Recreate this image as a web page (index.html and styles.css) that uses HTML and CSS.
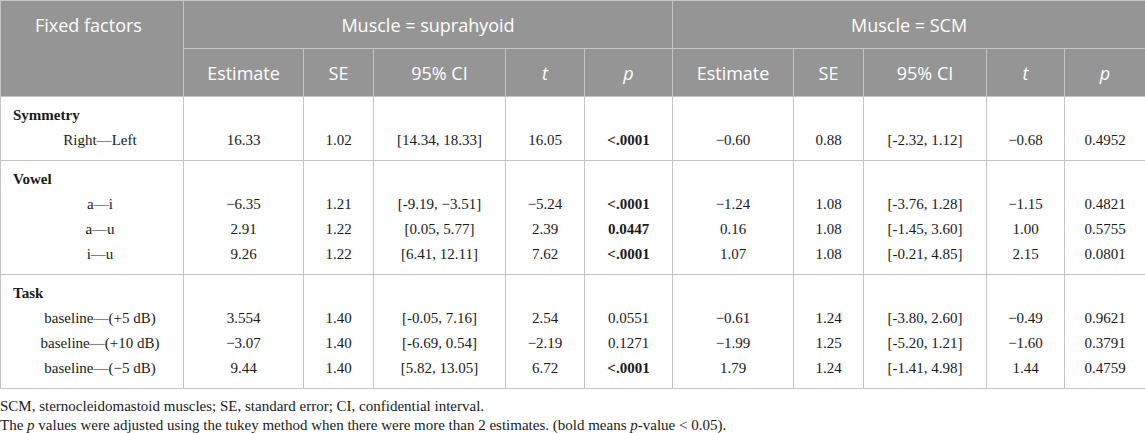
FILE: index.html
```html
<!DOCTYPE html>
<html lang="en">
    <head>
        <meta charset="UTF-8">
        <meta name="viewport" content="width=device-width, initial-scale=1.0">
        <title>Fixed factors by muscle</title>
        <link rel="stylesheet" href="styles.css">
    </head>
    <body>
        <table class="results">
            <colgroup>
                <col class="c-factor">
                <col class="c-est"><col class="c-se"><col class="c-ci"><col class="c-t"><col class="c-p">
                <col class="c-est2"><col class="c-se"><col class="c-ci2"><col class="c-t2"><col class="c-p2">
            </colgroup>
            <thead>
                <tr>
                    <th rowspan="2" class="factor-head">Fixed factors</th>
                    <th colspan="5">Muscle = suprahyoid</th>
                    <th colspan="5">Muscle = SCM</th>
                </tr>
                <tr>
                    <th>Estimate</th><th>SE</th><th>95% CI</th><th><i>t</i></th><th><i>p</i></th>
                    <th>Estimate</th><th>SE</th><th>95% CI</th><th><i>t</i></th><th><i>p</i></th>
                </tr>
            </thead>
            <tbody>
                <tr class="first"><td class="group">Symmetry</td><td></td><td></td><td></td><td></td><td></td><td></td><td></td><td></td><td></td><td></td></tr>
                <tr class="last"><td class="label">Right—Left</td><td>16.33</td><td>1.02</td><td>[14.34, 18.33]</td><td>16.05</td><td><b>&lt;.0001</b></td><td>−0.60</td><td>0.88</td><td>[-2.32, 1.12]</td><td>−0.68</td><td>0.4952</td></tr>
            </tbody>
            <tbody>
                <tr class="first"><td class="group">Vowel</td><td></td><td></td><td></td><td></td><td></td><td></td><td></td><td></td><td></td><td></td></tr>
                <tr><td class="label">a—i</td><td>−6.35</td><td>1.21</td><td>[-9.19, −3.51]</td><td>−5.24</td><td><b>&lt;.0001</b></td><td>−1.24</td><td>1.08</td><td>[-3.76, 1.28]</td><td>−1.15</td><td>0.4821</td></tr>
                <tr><td class="label">a—u</td><td>2.91</td><td>1.22</td><td>[0.05, 5.77]</td><td>2.39</td><td><b>0.0447</b></td><td>0.16</td><td>1.08</td><td>[-1.45, 3.60]</td><td>1.00</td><td>0.5755</td></tr>
                <tr class="last"><td class="label">i—u</td><td>9.26</td><td>1.22</td><td>[6.41, 12.11]</td><td>7.62</td><td><b>&lt;.0001</b></td><td>1.07</td><td>1.08</td><td>[-0.21, 4.85]</td><td>2.15</td><td>0.0801</td></tr>
            </tbody>
            <tbody>
                <tr class="first"><td class="group">Task</td><td></td><td></td><td></td><td></td><td></td><td></td><td></td><td></td><td></td><td></td></tr>
                <tr><td class="label">baseline—(+5 dB)</td><td>3.554</td><td>1.40</td><td>[-0.05, 7.16]</td><td>2.54</td><td>0.0551</td><td>−0.61</td><td>1.24</td><td>[-3.80, 2.60]</td><td>−0.49</td><td>0.9621</td></tr>
                <tr><td class="label">baseline—(+10 dB)</td><td>−3.07</td><td>1.40</td><td>[-6.69, 0.54]</td><td>−2.19</td><td>0.1271</td><td>−1.99</td><td>1.25</td><td>[-5.20, 1.21]</td><td>−1.60</td><td>0.3791</td></tr>
                <tr class="last"><td class="label">baseline—(−5 dB)</td><td>9.44</td><td>1.40</td><td>[5.82, 13.05]</td><td>6.72</td><td><b>&lt;.0001</b></td><td>1.79</td><td>1.24</td><td>[-1.41, 4.98]</td><td>1.44</td><td>0.4759</td></tr>
            </tbody>
        </table>
        <div class="notes">
            <p>SCM, sternocleidomastoid muscles; SE, standard error; CI, confidential interval.</p>
            <p>The <i>p</i> values were adjusted using the tukey method when there were more than 2 estimates. (bold means <i>p</i>-value &lt; 0.05).</p>
        </div>
    </body>
</html>
```

FILE: styles.css
```css
body {
    background: white;
    color: #1a1a1a;
    font-family: "Liberation Serif", "Times New Roman", serif;
    margin: 0;
    width: 1145px;
}
.results {
    border-collapse: collapse;
    table-layout: fixed;
    width: 1145px;
}
.c-factor { width: 183px; }
.c-est { width: 120px; }
.c-se { width: 70px; }
.c-ci { width: 132px; }
.c-t { width: 79px; }
.c-p { width: 88px; }
.c-est2 { width: 121px; }
.c-ci2 { width: 123px; }
.c-t2 { width: 78px; }
.c-p2 { width: 81px; }
th {
    background: #959595;
    border: 1px solid #c4c4c4;
    color: white;
    font-family: "Open Sans", "Liberation Sans", sans-serif;
    font-size: 18px;
    font-weight: normal;
    height: 47px;
    padding: 0;
    text-align: center;
}
th i {
    font-style: italic;
}
.factor-head {
    text-align: left;
    padding: 0 0 0 34px;
    vertical-align: top;
    line-height: 48px;
}
td {
    border-left: 1px solid #c4c4c4;
    border-right: 1px solid #c4c4c4;
    font-size: 15px;
    line-height: 25px;
    padding: 0;
    text-align: center;
    white-space: nowrap;
}
tbody {
    border-bottom: 1px solid #c4c4c4;
}
tr.first td {
    padding-top: 6px;
}
tr.last td {
    padding-bottom: 7px;
}
td.group {
    font-weight: bold;
    padding-left: 12px;
    text-align: left;
}
td.label {
    padding-left: 16px;
}
.notes {
    font-size: 15px;
    padding-top: 8px;
}
.notes p {
    line-height: 19px;
    margin: 0;
}
```
